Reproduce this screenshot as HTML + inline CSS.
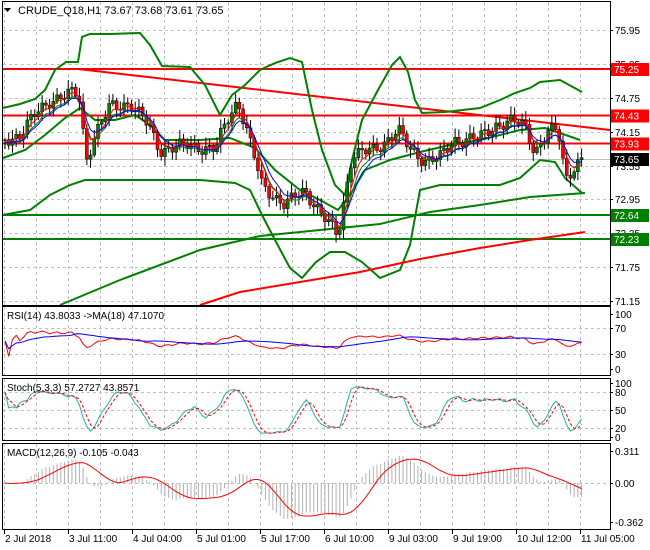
<!DOCTYPE html>
<html><head><meta charset="utf-8"><style>
html,body{margin:0;padding:0;background:#fff;width:650px;height:550px;overflow:hidden}
svg{display:block;font-family:"Liberation Sans",sans-serif;font-size:10px}
</style></head><body>
<svg id="s" width="650" height="550" xmlns="http://www.w3.org/2000/svg">
<rect width="650" height="550" fill="#fff"/>
<g id="grid" stroke="#c0c0c0" stroke-dasharray="3,3" stroke-width="1"></g>
<g id="lines"></g>
<g id="candles"></g>
<g id="ind"></g>
<g fill="none" stroke="#000" stroke-width="1">
<rect x="2.5" y="1.5" width="608" height="304"/>
<rect x="2.5" y="306.5" width="608" height="69"/>
<rect x="2.5" y="378.5" width="608" height="62"/>
<rect x="2.5" y="443.5" width="608" height="86"/>
</g>
<g id="axis"></g>
<text x="18" y="14" font-size="11">CRUDE_Q18,H1  73.67 73.68 73.61 73.65</text>
<path d="M4,8 L11,8 L7.5,12Z" fill="#000"/>
<text x="7" y="319" font-size="10">RSI(14) 43.8033  -&gt;MA(18) 47.1070</text>
<text x="7" y="391" font-size="10">Stoch(5,3,3) 57.2727 43.8571</text>
<text x="7" y="456" font-size="10">MACD(12,26,9) -0.105 -0.043</text>
</svg>
<script>
(function(){
var NS="http://www.w3.org/2000/svg";
function el(p,t,a,txt){var e=document.createElementNS(NS,t);for(var k in a)e.setAttribute(k,a[k]);if(txt!==undefined)e.textContent=txt;document.getElementById(p).appendChild(e);return e;}
function poly(p,pts,col,w,extra){var d="M"+pts.map(function(q){return q[0].toFixed(1)+","+q[1].toFixed(1)}).join(" L");var a={d:d,fill:"none",stroke:col,"stroke-width":w||1};for(var k in extra)a[k]=extra[k];return el(p,"path",a);}
var vx=[];for(var x=4;x<=600;x+=32)vx.push(x);
vx.forEach(function(x){[[2,305],[307,375],[379,440],[444,529]].forEach(function(r){el("grid","line",{x1:x+.5,y1:r[0],x2:x+.5,y2:r[1]});});});
[30,64,98,132,166,199,233,267,301].forEach(function(y){el("grid","line",{x1:3,y1:y+.5,x2:610,y2:y+.5});});
[328,354].forEach(function(y){el("grid","line",{x1:3,y1:y+.5,x2:610,y2:y+.5});});
[392,410,428].forEach(function(y){el("grid","line",{x1:3,y1:y+.5,x2:610,y2:y+.5});});
[483].forEach(function(y){el("grid","line",{x1:3,y1:y+.5,x2:610,y2:y+.5});});
el("lines","line",{x1:3,y1:159.5,x2:610,y2:159.5,stroke:"#c0c0c0"});
[[69,"#f00"],[115.5,"#f00"],[143.5,"#f00"],[215,"#008000"],[239,"#008000"]].forEach(function(l){el("lines","line",{x1:3,y1:l[0],x2:610,y2:l[0],stroke:l[1],"stroke-width":2});});
el("lines","line",{x1:78,y1:69,x2:610,y2:130,stroke:"#f00","stroke-width":2});
var G="#008000";
poly("lines",[[3,108],[20,104],[35,99],[45,90],[55,70],[66,62],[78,62],[82,37],[90,34],[110,34],[140,33],[150,45],[162,66],[190,67],[205,85],[220,115],[232,95],[245,85],[260,70],[275,63],[290,58],[302,62],[312,110],[322,150],[335,185],[345,195],[352,160],[362,120],[378,90],[392,65],[400,57],[408,72],[415,100],[422,113],[445,112],[480,108],[500,100],[515,93],[530,88],[540,82],[560,80],[582,92]],G,2);
poly("lines",[[3,158],[25,150],[45,135],[65,118],[80,108],[95,120],[115,120],[135,115],[150,125],[165,140],[200,140],[230,138],[255,148],[275,170],[300,190],[320,200],[338,210],[350,195],[365,170],[390,160],[420,152],[450,145],[480,140],[520,130],[545,128],[560,133],[580,140]],G,2);
poly("lines",[[3,215],[30,210],[50,195],[70,185],[85,180],[140,180],[200,180],[235,183],[250,190],[262,215],[275,240],[290,268],[302,278],[316,262],[330,252],[345,252],[362,262],[380,278],[400,270],[410,245],[420,190],[440,185],[500,185],[520,178],[540,160],[555,162],[565,178],[582,193]],G,2);
poly("lines",[[60,305],[120,280],[200,250],[260,236],[320,230],[380,224],[430,212],[480,205],[530,197],[585,193]],G,2);
poly("lines",[[200,305],[240,292],[300,282],[360,272],[420,259],[480,248],[530,240],[585,232]],"#f00",2);
var key=[[4,140],[20,135],[35,115],[50,100],[75,93],[80,100],[86,160],[95,135],[110,107],[130,103],[148,125],[160,150],[190,145],[215,150],[228,118],[238,100],[248,135],[262,185],[285,205],[305,190],[322,215],[338,236],[345,195],[352,155],[375,150],[398,130],[410,150],[425,160],[440,158],[455,140],[480,138],[495,125],[510,122],[525,125],[535,152],[548,133],[558,130],[566,178],[575,165],[582,160]];
function interp(x){for(var i=1;i<key.length;i++){if(x<=key[i][0]){var a=key[i-1],b=key[i];return a[1]+(b[1]-a[1])*(x-a[0])/(b[0]-a[0]);}}return key[key.length-1][1];}
function y2p(y){return 75.95-(y-30)/56.46;}function p2y(p){return 30+(75.95-p)*56.46;}
var N=156,xs=[],C=[],O=[],H=[],L=[];var prev=interp(4);
for(var i=0;i<N;i++){var x=5+i*3.72;xs.push(x);var c=interp(x)+Math.sin(i*1.7)*5+Math.sin(i*0.63)*3;var o=prev;prev=c;
var hi=Math.min(o,c)-2-Math.abs(Math.sin(i*2.3))*7,lo=Math.max(o,c)+2+Math.abs(Math.cos(i*1.9))*7;
O.push(y2p(o));C.push(y2p(c));H.push(y2p(hi));L.push(y2p(lo));
el("candles","line",{x1:x,y1:hi,x2:x,y2:lo,stroke:"#000"});
var bt=Math.min(o,c),bh=Math.max(1,Math.abs(c-o));
el("candles","rect",{x:x-1.5,y:bt,width:3,height:bh,fill:c<o?"#008000":"#f00",stroke:"#000","stroke-width":0.5});}
function ema(a,n){var k=2/(n+1),r=[],v=a[0];for(var i=0;i<a.length;i++){v=a[i]*k+v*(1-k);r.push(v);}return r;}
function sma(a,n){var r=[];for(var i=0;i<a.length;i++){var s=0,c=0;for(var j=Math.max(0,i-n+1);j<=i;j++){s+=a[j];c++;}r.push(s/c);}return r;}
[[5,"#008000"],[4,"#f00"],[7,"#00f"]].forEach(function(m){var e=ema(C,m[0]);poly("ind",e.map(function(v,i){return [xs[i],p2y(v)+ (m[0]==4?0:m[0]==5?3:2)]}),m[1],1);});
var rsi=[],ag=0,al=0;for(var i=0;i<N;i++){var d=i?C[i]-C[i-1]:0;var g=Math.max(d,0),l=Math.max(-d,0);ag=(ag*13+g)/14;al=(al*13+l)/14;rsi.push(al+ag==0?50:100*ag/(ag+al));}
function ry(v){v=50+(v-50)*0.55;return 369-v*0.56;}
var rma=sma(rsi,18);
poly("ind",rsi.map(function(v,i){return[xs[i],ry(v)]}),"#f00",1);
poly("ind",rma.map(function(v,i){return[xs[i],ry(v)]}),"#00f",1);
var K=[];for(var i=0;i<N;i++){var hh=-1e9,ll=1e9;for(var j=Math.max(0,i-8);j<=i;j++){hh=Math.max(hh,H[j]);ll=Math.min(ll,L[j]);}K.push(hh==ll?50:100*(C[i]-ll)/(hh-ll));}
K=sma(K,3);var D=sma(K,3);
function sy(v){return 437-v*0.54;}
poly("ind",K.map(function(v,i){return[xs[i],sy(v)]}),"#20b2aa",1);
poly("ind",D.map(function(v,i){return[xs[i],sy(v)]}),"#f00",1,{"stroke-dasharray":"3,2"});
var e12=ema(C,12),e26=ema(C,26),m=e12.map(function(v,i){return v-e26[i]});var sg=sma(m,9);
var mx=0;m.forEach(function(v,i){if(i>20)mx=Math.max(mx,Math.abs(v));});var sc=36/mx;
m.forEach(function(v,i){if(i<3)return;el("ind","line",{x1:xs[i],y1:483,x2:xs[i],y2:483-v*sc,stroke:"#b0b0b0"});});
poly("ind",sg.map(function(v,i){return[xs[i],483-v*sc]}),"#f00",1);
function lab(y,t){el("axis","line",{x1:610,y1:y+.5,x2:613,y2:y+.5,stroke:"#000"});el("axis","text",{x:615,y:y+4},t);}
[[30,"75.95"],[64,"75.35"],[98,"74.75"],[132,"74.15"],[166,"73.55"],[199,"72.95"],[233,"72.35"],[267,"71.75"],[301,"71.15"],
[314,"100"],[328,"70"],[354,"30"],[369,"0"],[383,"100"],[392,"80"],[410,"50"],[428,"20"],[437,"0"],[451,"0.311"],[483,"0.00"],[522,"-0.362"]].forEach(function(a){lab(a[0],a[1]);});
[[69,"75.25","#f00"],[115.5,"74.43","#f00"],[143.5,"73.93","#f00"],[159,"73.65","#000"],[215,"72.64","#008000"],[239,"72.23","#008000"]].forEach(function(b){el("axis","rect",{x:611,y:b[0]-6,width:38,height:13,fill:b[2]});el("axis","text",{x:614,y:b[0]+4,fill:"#fff"},b[1]);});
["2 Jul 2018","3 Jul 11:00","4 Jul 04:00","5 Jul 01:00","5 Jul 17:00","6 Jul 10:00","9 Jul 03:00","9 Jul 19:00","10 Jul 12:00","11 Jul 05:00"].forEach(function(t,i){var x=4+64*i;el("axis","line",{x1:x+.5,y1:530,x2:x+.5,y2:534,stroke:"#000"});el("axis","text",{x:x+1,y:542},t);});
})();
</script>
</body></html>
